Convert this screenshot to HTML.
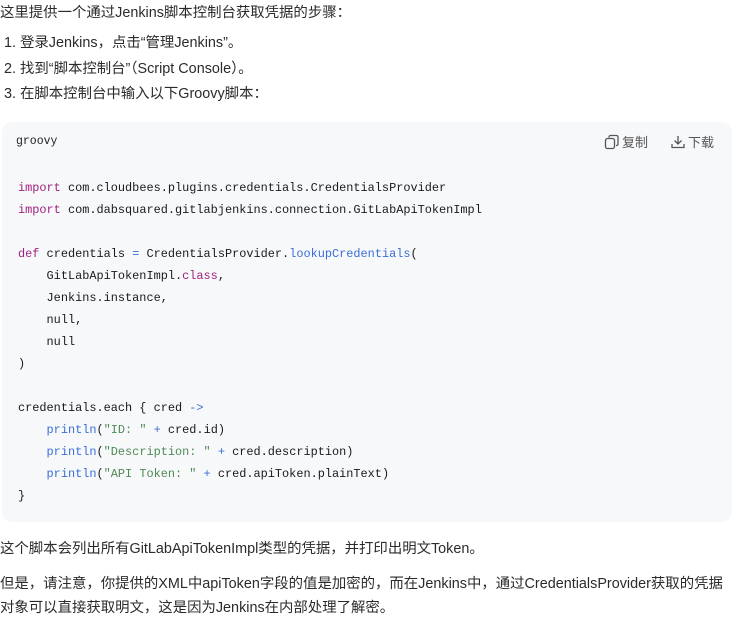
<!DOCTYPE html>
<html><head><meta charset="utf-8"><style>
body{margin:0;width:755px;height:625px;background:#fff;font-family:"Liberation Sans","Noto Sans CJK SC",sans-serif;color:#2b2b2b;font-size:14.4px;overflow:hidden;position:relative}
.t{position:absolute;left:0;white-space:nowrap;line-height:20px}
.code{position:absolute;left:2px;top:122px;width:730px;height:400px;background:#f7f8fa;border-radius:10px}
pre{position:absolute;left:18px;top:177px;margin:0;font-family:"Liberation Mono",monospace;font-size:11.9px;line-height:22px;color:#1a1a1a}
.k{color:#a0217f}.f{color:#3b6fd6}.s{color:#4f8a55}.o{color:#3b6fd6}
.lang{position:absolute;left:16px;top:135px;font-family:"Liberation Mono",monospace;font-size:11.5px;color:#222}
.btn{position:absolute;top:132px;font-size:13px;color:#555;display:flex;align-items:center;gap:2px}
</style></head><body>
<div class="t" style="top:3px">这里提供一个通过Jenkins脚本控制台获取凭据的步骤：</div>
<div class="t" style="top:33px;left:4px">1. 登录Jenkins，点击“管理Jenkins”。</div>
<div class="t" style="top:59px;left:4px">2. 找到“脚本控制台”（Script Console）。</div>
<div class="t" style="top:84px;left:4px">3. 在脚本控制台中输入以下Groovy脚本：</div>
<div class="code"></div>
<div class="lang">groovy</div>
<div class="btn" style="left:604px"><svg width="16" height="16" viewBox="0 0 16 16" fill="none" stroke="#555" stroke-width="1.3"><rect x="1.5" y="4.5" width="9" height="10" rx="2"/><path d="M5 3.5V3a1.5 1.5 0 0 1 1.5-1.5h6A1.5 1.5 0 0 1 14 3v7a1.5 1.5 0 0 1-1.5 1.5H12"/></svg>复制</div>
<div class="btn" style="left:670px"><svg width="16" height="16" viewBox="0 0 16 16" fill="none" stroke="#555" stroke-width="1.3"><path d="M8 2v8M4.5 6.5 8 10l3.5-3.5M2 10v3.5h12V10"/></svg>下载</div>
<pre><span class="k">import</span> com.cloudbees.plugins.credentials.CredentialsProvider
<span class="k">import</span> com.dabsquared.gitlabjenkins.connection.GitLabApiTokenImpl

<span class="k">def</span> credentials <span class="o">=</span> CredentialsProvider.<span class="f">lookupCredentials</span>(
    GitLabApiTokenImpl.<span class="k">class</span>,
    Jenkins.instance,
    null,
    null
)

credentials.each { cred <span class="o">-&gt;</span>
    <span class="f">println</span>(<span class="s">"ID: "</span> <span class="o">+</span> cred.id)
    <span class="f">println</span>(<span class="s">"Description: "</span> <span class="o">+</span> cred.description)
    <span class="f">println</span>(<span class="s">"API Token: "</span> <span class="o">+</span> cred.apiToken.plainText)
}</pre>
<div class="t" style="top:539px">这个脚本会列出所有GitLabApiTokenImpl类型的凭据，并打印出明文Token。</div>
<div class="t" style="top:574px">但是，请注意，你提供的XML中apiToken字段的值是加密的，而在Jenkins中，通过CredentialsProvider获取的凭据</div>
<div class="t" style="top:598px">对象可以直接获取明文，这是因为Jenkins在内部处理了解密。</div>
</body></html>
